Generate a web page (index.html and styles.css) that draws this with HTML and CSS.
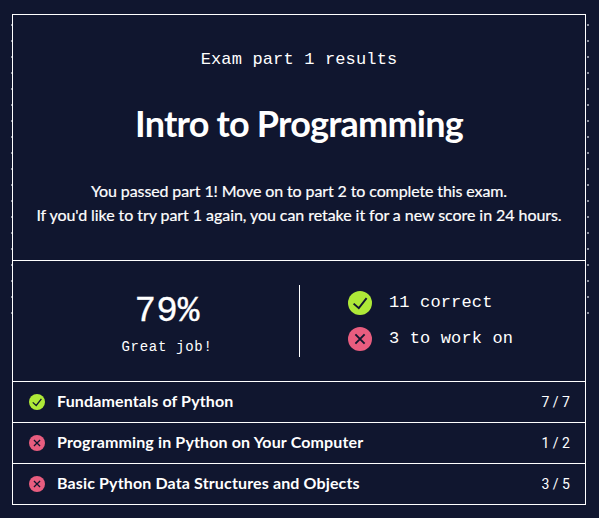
FILE: index.html
```html
<!DOCTYPE html>
<html lang="en">
<head>
<meta charset="utf-8">
<title>Exam part 1 results</title>
<link rel="stylesheet" href="styles.css">
</head>
<body>
<svg class="sprite" aria-hidden="true">
  <symbol id="pass" viewBox="0 0 24 24"><circle cx="12" cy="12" r="12" fill="#aee938"/><path d="M5.6 12.6l5.2 4.6L18.6 7.2" fill="none" stroke="#10162f" stroke-width="1.9"/></symbol>
  <symbol id="miss" viewBox="0 0 24 24"><circle cx="12" cy="12" r="12" fill="#e85d7f"/><path d="M7.4 7.4l9.2 9.2M16.6 7.4l-9.2 9.2" fill="none" stroke="#10162f" stroke-width="1.9"/></symbol>
</svg>
<main class="results">
  <div class="card">
    <header class="intro">
      <p class="eyebrow">Exam part 1 results</p>
      <h1 class="title">Intro to Programming</h1>
      <p class="message"><span class="line-one">You passed part 1! Move on to part 2 to complete this exam.</span><br><span class="line-two">If you'd like to try part 1 again, you can retake it for a new score in 24 hours.</span></p>
    </header>
    <section class="summary">
      <div class="score">
        <p class="percent">79%</p>
        <p class="praise">Great job!</p>
      </div>
      <div class="counts">
        <p class="count"><svg class="icon-large"><use href="#pass"/></svg><span>11 correct</span></p>
        <p class="count"><svg class="icon-large"><use href="#miss"/></svg><span>3 to work on</span></p>
      </div>
    </section>
    <ul class="topics">
      <li class="topic"><svg class="icon-small"><use href="#pass"/></svg><span class="name">Fundamentals of Python</span><span class="tally">7 / 7</span></li>
      <li class="topic"><svg class="icon-small"><use href="#miss"/></svg><span class="name">Programming in Python on Your Computer</span><span class="tally">1 / 2</span></li>
      <li class="topic"><svg class="icon-small"><use href="#miss"/></svg><span class="name">Basic Python Data Structures and Objects</span><span class="tally">3 / 5</span></li>
    </ul>
  </div>
</main>
</body>
</html>
```
FILE: styles.css
```css
* { box-sizing: border-box; }
body {
  margin: 0;
  background: #10162f;
  color: #fff;
  font: 16px/24px Lato, sans-serif;
}
p, h1, ul { margin: 0; padding: 0; }
.sprite { display: none; }
.results {
  position: relative;
  width: 599px;
  height: 518px;
  padding: 14px 13px 13px 12px;
}
.results::before {
  content: "";
  position: absolute;
  left: 11px;
  top: 24px;
  width: 578px;
  height: 290px;
  background: #8b8f9e;
  -webkit-mask: conic-gradient(from 270deg at 2px 2px, #000 90deg, transparent 0) 0 0 / 16px 16px;
  mask: conic-gradient(from 270deg at 2px 2px, #000 90deg, transparent 0) 0 0 / 16px 16px;
}
.card {
  position: relative;
  width: 574px;
  height: 491px;
  border: 1px solid #fff;
  background: #10162f;
}
.intro {
  height: 245px;
  padding-top: 33px;
  text-align: center;
}
.eyebrow, .praise, .count, .percent { font-family: "Liberation Mono", monospace; }
.eyebrow { font-size: 17px; letter-spacing: 0.15px; }
.title {
  margin-top: 29px;
  font-size: 36px;
  line-height: 44px;
  font-weight: 700;
  letter-spacing: -0.78px;
}
.message {
  margin-top: 34px;
  white-space: nowrap;
  -webkit-text-stroke: 0.2px #fff;
}
.line-one { letter-spacing: -0.11px; }
.line-two { letter-spacing: -0.06px; }
.summary {
  display: flex;
  align-items: flex-start;
  height: 121px;
  padding-top: 24px;
  border-top: 1px solid #fff;
}
.score {
  width: 287px;
  height: 72px;
  padding-left: 22px;
  border-right: 1px solid #fff;
  text-align: center;
}
.percent {
  padding-top: 2px;
  font-size: 36px;
  line-height: 50px;
  -webkit-text-stroke: 0.3px #fff;
}
.praise { font-size: 14px; line-height: 20px; letter-spacing: 0.7px; }
.counts {
  display: flex;
  flex-direction: column;
  gap: 12px;
  padding: 6px 0 0 48px;
}
.count {
  display: flex;
  align-items: center;
  gap: 17px;
  font-size: 17px;
  letter-spacing: 0.15px;
}
.icon-large { width: 24px; height: 24px; }
.icon-small { width: 16px; height: 16px; }
.topics { list-style: none; }
.topic {
  display: flex;
  align-items: center;
  height: 41px;
  padding: 0 15px 0 16px;
  border-top: 1px solid #fff;
}
.name {
  margin-left: 12px;
  padding-bottom: 2px;
  font-weight: 700;
  letter-spacing: 0.14px;
}
.tally { margin-left: auto; font-family: Roboto, sans-serif; font-size: 14px; }
```
